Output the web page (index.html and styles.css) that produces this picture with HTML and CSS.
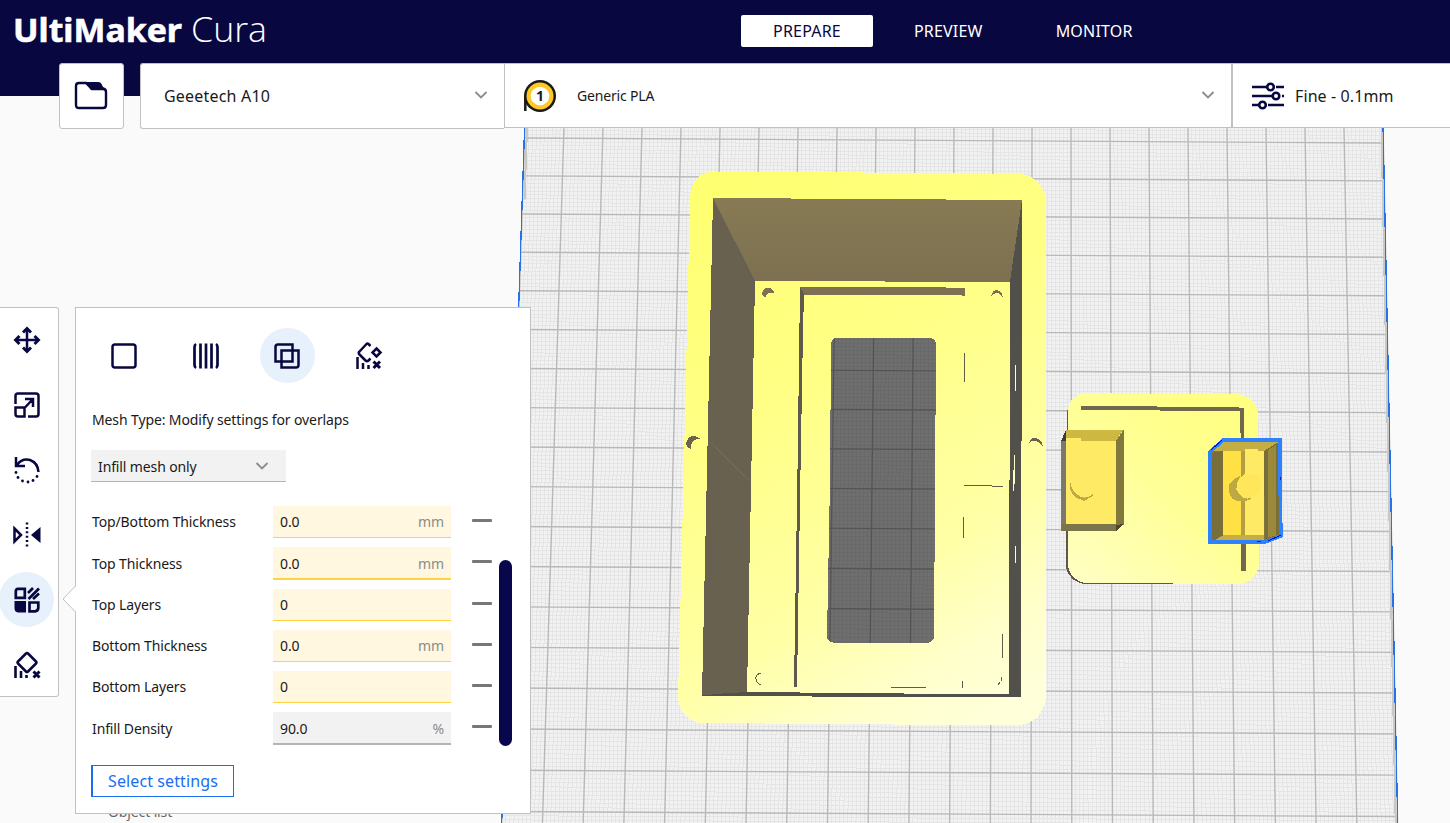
FILE: index.html
```html
<!DOCTYPE html>
<html lang="en">
<head>
<meta charset="utf-8">
<title>UltiMaker Cura</title>
<link rel="stylesheet" href="styles.css">
</head>
<body>
<div class="app">
  <svg class="scene" width="1450" height="823" viewBox="0 0 1450 823">
    <defs>
      <linearGradient id="body" gradientUnits="userSpaceOnUse" x1="740" y1="180" x2="1040" y2="690">
        <stop offset="0" stop-color="#ffff72"/><stop offset=".35" stop-color="#ffff86"/><stop offset=".7" stop-color="#ffffa6"/><stop offset=".88" stop-color="#ffffcc"/><stop offset="1" stop-color="#ffffda"/>
      </linearGradient>
      <linearGradient id="plate" gradientUnits="userSpaceOnUse" x1="1240" y1="400" x2="1080" y2="580">
        <stop offset="0" stop-color="#ffff80"/><stop offset=".5" stop-color="#ffff98"/><stop offset="1" stop-color="#ffffc2"/>
      </linearGradient>
      <linearGradient id="wall" x1="0" y1="0" x2="0" y2="1">
        <stop offset="0" stop-color="#877a54"/><stop offset="1" stop-color="#7c7051"/>
      </linearGradient>
    </defs>
    <path fill="#f2f2f2" d="M525 100L1383 100L1397.5 823L501.5 823Z"/>
    <g id="grid" class="crisp"></g>
    <path class="bed-shade" d="M1381.500 128L1395.700 823M527 128L524.500 200"/>
    <path class="bed-edge" d="M525.5 100L501.7 823M1382.5 100L1397.7 823"/>

    <path fill="url(#body)" fill-rule="evenodd" d="M690 200Q691 174 711 172L810 172L1022 174Q1042 178 1046 199L1046 697Q1043 721 1021 725L893 724.500L699 723Q680 717 678 698L683 500ZM831 343Q832 338 837 337.500L930 338Q935 339 936 343L934 637Q933 642 929 642.500L833 642.500Q828 642 827 637L830 480Z"/>
    <path fill="#000" fill-opacity=".54" d="M831 343Q832 338 837 337.500L930 338Q935 339 936 343L934 637Q933 642 929 642.500L833 642.500Q828 642 827 637L830 480Z"/>
    <path fill="url(#wall)" d="M713 198L1022 200L1011 282L754 281Z"/>
    <path fill="#696150" d="M713 198L755 281L747 693L702 695Z"/>
    <path fill="#52504b" d="M1022 200L1021 697.500L1009 695L1010 281ZM702 695.500L722 693.500L747 692L1009 694.500L1021 697.500L812 696.500Z"/>
    <path class="seam" d="M709 441L751 482"/>
    <path fill="#7d7151" d="M800 287L937 287L965 288.500L965 296L958 295L804 295Z"/>
    <path fill="#605a4d" d="M800 287L804 294L803 330L800.500 470L797 687L794 687L797.500 470Z"/>
    <path fill="#7d7151" d="M762 294Q763 287 769 288Q774 289 774 293Q767 291 765 298ZM991 297Q992 290 997 290Q1002 291 1003 298Q1000 293 997 293Q993 293 991 297Z"/>
    <path fill="#6b6350" d="M686 443Q688 436 694 436Q699 437 700 439Q690 439 691 449Q687 448 686 443ZM1029 443Q1031 437 1036 438Q1042 439 1043 447Q1039 441 1035 441Q1032 440 1029 443Z"/>
    <path class="line" d="M761 673Q755 675 756 679Q757 684 761 685M963.500 517V538M964 485.500H992M992 486.500H1003M964.500 353V382M1002.500 634V658M891 687.500H926M962.500 681V688M1001 677V681M1000 682L998 685"/>
    <path class="gap-line" d="M1014.500 455V484M1013.500 470V491M1015.500 546V563M1015.500 365V391"/>

    <path fill="#5d584b" d="M1067 410L1066 568Q1071 583 1086 584L1240 584.500L1240 575L1080 410Z"/>
    <path fill="url(#plate)" d="M1068 410Q1070 394 1086 393L1111 393L1112 394L1238 394Q1256 397 1258 413L1259 565Q1256 581 1240 584L1173 583.500L1083 582.500Q1069 578 1068 565Z"/>
    <path fill="#6f684e" d="M1081 406V409.500L1160 410.500L1240 411V426L1241 440V570.500H1246L1244 430V408L1233 407Z"/>

    <path fill="#7c786b" d="M1061 441L1066 430V531H1061Z"/>
    <path fill="#3e3c36" d="M1061 441L1066 430V441Z"/>
    <path fill="#ffea65" d="M1066 438H1116V525H1066Z"/>
    <path fill="#cdb941" d="M1066 430H1123L1116 441L1081 440.500V438H1066Z"/>
    <path fill="#82783c" d="M1123.500 430V525H1116V441Z"/>
    <path fill="#7c7549" d="M1061 524H1116V531H1061Z"/>
    <path fill="#4c472b" d="M1116 525L1123.500 524L1116 531Z"/>
    <path fill="#bda944" d="M1070 481Q1071 492 1081 497Q1087 499 1093 494L1093 496L1084 501L1075 497Q1068 489 1070 481Z"/>

    <path fill="#82763c" d="M1210 452L1223 440H1281L1282 535L1265 542H1210Z"/>
    <path fill="#ffe145" d="M1223 451H1245V535H1223Z"/>
    <path fill="#ffea65" d="M1245 450H1264V535H1245Z"/>
    <path fill="#c4ae43" d="M1211 451L1223 441H1280L1265 451H1211ZM1213 541L1224 535H1264V541Z"/>
    <path fill="#ffea65" d="M1245 449H1258V452H1245Z"/>
    <path fill="#786e3a" d="M1211 453L1223 451V535L1212 541ZM1264 451L1280 441V534L1265 540Z"/>
    <path fill="#9c8a3c" d="M1268 450L1276 445V536L1268 537Z"/>
    <path fill="#b39e42" d="M1241 451H1245V535H1241Z"/>
    <path fill="#bda944" d="M1240 476Q1226 482 1229 492Q1232 506 1252 499L1236 490Z"/>
    <path fill="#ffe65a" d="M1245 474Q1232 482 1239 494Q1246 502 1256 496Q1265 487 1257 475Z"/>
    <path class="selection" d="M1210 452L1223 440H1280V480L1281 536L1265 542H1210Z"/>
    <path class="selection-dark" d="M1211 450L1222 440M1280.500 477V480M1268 541L1281 535M1257 541.500H1261"/>
  </svg>

  <header class="header">
    <svg class="logo" width="270" height="56" viewBox="0 0 270 56">
      <text class="logo-bold" x="0" y="42" textLength="169" lengthAdjust="spacingAndGlyphs">UltiMaker</text>
      <text class="logo-light" x="178" y="42" textLength="76" lengthAdjust="spacingAndGlyphs">Cura</text>
    </svg>
    <nav class="tabs"><span class="tab active">PREPARE</span><span class="tab">PREVIEW</span><span class="tab">MONITOR</span></nav>
  </header>

  <div class="toolbar">
    <div class="open-file">
      <svg width="34" height="34" viewBox="0 0 34 34"><path fill="#fff" stroke="#08073f" stroke-width="2.400" d="M5 4H12L18 10H29Q32 10 32 13V26Q32 29 29 29H5Q2 29 2 26V7Q2 4 5 4Z"/><path fill="#08073f" d="M11 3H24Q27 3 28 6L29 8Q33 9 33 14L31 11H17Z"/></svg>
    </div>
    <div class="machine"><span>Geeetech A10</span>
      <svg class="chevron" width="14" height="10" viewBox="0 0 14 10"><path d="M1.500 1L7 6.500L12.500 1"/></svg></div>
    <div class="material">
      <svg width="34" height="34" viewBox="0 0 34 34"><path stroke="#191919" stroke-width="2.500" d="M2.300 17V32"/><circle cx="17" cy="17" r="16" fill="#191919"/><circle cx="17" cy="17" r="13.500" fill="#ffc924"/><circle cx="17" cy="17" r="9.300" fill="#fff"/><text class="spool-number" x="17" y="22" text-anchor="middle">1</text></svg>
      <span class="material-name">Generic PLA</span>
      <svg class="chevron" width="14" height="10" viewBox="0 0 14 10"><path d="M1.500 1L7 6.500L12.500 1"/></svg></div>
    <div class="profile">
      <svg width="34" height="30" viewBox="0 0 34 30"><g fill="none" stroke="#08073f" stroke-width="2.600"><path d="M1 6H16M25 6H33M1 15H21M31 15H33M1 24H8M17 24H33"/><circle cx="19.500" cy="6" r="3.300"/><circle cx="25" cy="15" r="3.300"/><circle cx="11.500" cy="24" r="3.300"/></g></svg>
      <span>Fine - 0.1mm</span></div>
  </div>

  <main class="workspace">
    <aside class="tools">
      <span class="tool"><svg width="28" height="28" viewBox="0 0 28 28" class="ink"><path d="M14 3V25M3 14H25"/><path d="M10 6.500L14 2.500L18 6.500M10 21.500L14 25.500L18 21.500M6.500 10L2.500 14L6.500 18M21.500 10L25.500 14L21.500 18" stroke-width="2.900"/></svg></span>
      <span class="tool"><svg width="28" height="28" viewBox="0 0 28 28" class="ink"><path d="M2.500 13V5Q2.500 2.500 5 2.500H23Q25.500 2.500 25.500 5V23Q25.500 25.500 23 25.500H15M2.500 16.500H11.500V25.500H5Q2.500 25.500 2.500 23ZM11.500 17L20 8M12 8H20V16"/></svg></span>
      <span class="tool"><svg width="28" height="28" viewBox="0 0 28 28" class="ink"><path d="M3 1V10H12M4 9Q9 2 17 4Q25 7 25.500 16"/><g class="solid"><circle cx="3" cy="16.500" r="1.400"/><circle cx="5" cy="21.500" r="1.400"/><circle cx="9.500" cy="25" r="1.400"/><circle cx="15" cy="26" r="1.400"/><circle cx="20" cy="24.500" r="1.400"/><circle cx="24" cy="20.500" r="1.400"/></g></svg></span>
      <span class="tool"><svg width="30" height="28" viewBox="0 0 30 28" class="ink"><path d="M2.500 7.500L9 14L2.500 20.500Z"/><path class="solid" d="M28.500 6V22L19 14Z"/><path stroke-dasharray="2 2.400" d="M15 1.500V27"/></svg></span>
      <span class="tool active"><svg width="28" height="28" viewBox="0 0 28 28" class="ink"><path stroke-width="2.700" d="M5 2.800H11.800V11.800H2.800V5Q3 3 5 2.800ZM16.500 16.500H25.300V22Q25 25 22 25.300H16.500Z"/><path class="solid" d="M1.500 15H13V26.500H5Q1.500 26 1.500 22Z"/><path stroke-width="2.700" d="M15 7L20 2M15.500 13L26 2.500M20 13L26 7.500"/></svg></span>
      <span class="tool"><svg width="28" height="30" viewBox="0 0 28 30" class="ink"><path d="M13 3.500Q14 2.500 15 3.500L23 11.500Q24 12.500 23 13.500L15 21.500Q14 22.500 13 21.500L5 13.500Q4 12.500 5 11.500Z"/><path d="M2.500 16V28M8 21V28M13.500 25V28" stroke-width="2.600"/><path d="M20.500 21.500L26.500 27.500M26.500 21.500L20.500 27.500" stroke-width="3"/></svg></span>
    </aside>

    <section class="panel">
      <svg class="pointer" width="14" height="26" viewBox="0 0 14 26"><path fill="#fff" d="M14 0L1 13L14 26Z"/><path fill="none" stroke="#c0c1c2" d="M13.500 0L1 13L13.500 26"/></svg>
      <div class="mesh-types">
        <span class="mesh-type"><svg width="28" height="28" viewBox="0 0 28 28" class="ink"><rect x="2.500" y="2.500" width="23" height="23" rx="2.500"/></svg></span>
        <span class="mesh-type"><svg width="28" height="28" viewBox="0 0 28 28" class="ink"><path stroke-width="2.700" d="M4 2Q2.500 3 2.500 5V23Q2.500 25 4 26M8.500 1.500V26.500M14 1.500V26.500M19.500 1.500V26.500M24 2Q25.500 3 25.500 5V23Q25.500 25 24 26"/></svg></span>
        <span class="mesh-type active"><svg width="28" height="28" viewBox="0 0 28 28" class="ink"><path d="M5 2.500H19.500V19.500H2.500V5Q2.500 2.500 5 2.500ZM8.500 8.500H25.500V23Q25.500 25.500 23 25.500H8.500Z"/></svg></span>
        <span class="mesh-type"><svg width="28" height="28" viewBox="0 0 28 28" class="ink"><path d="M15.500 4L13.500 2Q12.500 1 11.500 2L4.500 9.500Q3 11 4.500 12.500L10.500 18.500Q12 20 13.500 18.500L15.500 16.500"/><path d="M21.500 6.500L25.500 10.500L21.500 14.500L17.500 10.500Z"/><path d="M2.500 15V27M8 21V27M13.500 23V27" /><path stroke-width="3" d="M18.500 19.500L25 26M25 19.500L18.500 26"/></svg></span>
      </div>
      <div class="mesh-label">Mesh Type: Modify settings for overlaps</div>
      <div class="mesh-select"><span>Infill mesh only</span><svg class="chevron" width="14" height="8" viewBox="0 0 14 8"><path d="M1.500 1L7 6.500L12.500 1"/></svg></div>
      <div class="settings-area">
        <div class="settings">
          <div class="setting"><label>Top/Bottom Thickness</label><div class="field"><span>0.0</span><i>mm</i></div><b class="minus"></b></div>
          <div class="setting lower"><label>Top Thickness</label><div class="field thick"><span>0.0</span><i>mm</i></div><b class="minus"></b></div>
          <div class="setting"><label>Top Layers</label><div class="field"><span>0</span></div><b class="minus"></b></div>
          <div class="setting"><label>Bottom Thickness</label><div class="field"><span>0.0</span><i>mm</i></div><b class="minus"></b></div>
          <div class="setting"><label>Bottom Layers</label><div class="field"><span>0</span></div><b class="minus"></b></div>
          <div class="setting lower"><label>Infill Density</label><div class="field thick plain"><span>90.0</span><i>%</i></div><b class="minus"></b></div>
        </div>
        <div class="scrollbar"></div>
      </div>
      <div class="select-settings">Select settings</div>
    </section>
  </main>
  <footer class="object-list">Object list</footer>
</div>
<script src="grid.js"></script>
</body>
</html>
```
FILE: styles.css
```css
* { box-sizing: border-box; }
body { margin: 0; background: #fafafa; color: #191919; font-family: "Noto Sans", sans-serif; font-size: 14px; }
.app { position: relative; width: 1450px; height: 823px; overflow: hidden; display: flex; flex-direction: column; }

/* Build plate and models, drawn behind the interface */
.scene { position: absolute; left: 0; top: 0; shape-rendering: crispEdges; }
.scene .minor { stroke: #e5e5e5; stroke-width: 1; }
.scene .major { stroke: #b8b8b8; stroke-width: 1.4; shape-rendering: auto; }
.bed-shade { stroke: #c8c8c4; stroke-width: 2; fill: none; }
.bed-edge { stroke: #2672e8; stroke-width: 1.3; fill: none; }
.seam { stroke: #736a53; stroke-width: 1.2; fill: none; }
.line { stroke: #605c4c; fill: none; }
.gap-line { stroke: #ffffc4; fill: none; }
.selection { stroke: #2f82ff; stroke-width: 3.5; fill: none; }
.selection-dark { stroke: #0016d0; fill: none; }

.header { position: relative; flex: none; height: 96px; background: #08073f; display: flex; align-items: flex-start; }
.logo { flex: none; width: 270px; margin: 0 0 0 13px; }
.logo-bold { font: 700 33px "Noto Sans", sans-serif; fill: #fff; stroke: #fff; stroke-width: .6; }
.logo-light { font: 300 34px "Open Sans", sans-serif; fill: #fff; }
.tabs { display: flex; gap: 9px; margin: 15px 0 0 458px; }
.tab { height: 32px; padding: 0 32px; line-height: 32px; font-size: 16px; letter-spacing: .2px; color: #fff; border-radius: 2px; }
.tab.active { background: #fff; color: #08073f; }

.toolbar { position: relative; flex: none; display: flex; height: 65px; margin-top: -33px; padding-left: 59px; font-size: 16px; }
.open-file { display: flex; align-items: center; justify-content: center; width: 65px; height: 66px; margin-right: 16px; padding-right: 1px; background: #fff; border: 1px solid #c0c1c2; border-radius: 3px; }
.machine, .material, .profile { display: flex; align-items: center; height: 65px; background: #fff; border: 1px solid #c0c1c2; border-right: 0; }
.machine { width: 364px; height: 66px; padding: 0 16px 0 23px; justify-content: space-between; border-radius: 3px 0 0 3px; letter-spacing: .2px; }
.material { width: 727px; padding: 0 16px 0 18px; }
.material-name { margin-left: 20px; flex: 1; font-size: 14px; letter-spacing: -.18px; }
.profile { flex: 1; padding-left: 18px; border-left-width: 2px; gap: 10px; letter-spacing: .1px; }
.profile svg { flex: none; }
.chevron { fill: none; stroke: #8c8c8c; stroke-width: 1.8; }
.spool-number { font: 700 14px "Noto Sans", sans-serif; fill: #191919; }

.workspace { position: relative; z-index: 1; flex: none; display: flex; align-items: flex-start; margin-top: 179px; }
.tools { width: 59px; height: 390px; padding: 4px 0 0; background: #fff; border: 1px solid #c0c1c2; border-left: 0; border-radius: 0 3px 3px 0; }
.tool { display: flex; align-items: center; justify-content: center; width: 55px; height: 55px; margin: 0 0 10px -1px; border-radius: 50%; }
.active.tool, .mesh-type.active { background: #e6f1fc; }
.ink { fill: none; stroke: #08073f; stroke-width: 2.5; }
.solid { fill: #08073f; stroke: none; }

.panel { position: relative; width: 456px; height: 507px; margin-left: 16px; padding: 20px 0 0 16px; background: #fff; border: 1px solid #c0c1c2; letter-spacing: -.12px; }
.pointer { position: absolute; left: -14px; top: 278px; }
.mesh-types { display: flex; gap: 27px; height: 55px; margin-left: 5px; }
.mesh-type { display: flex; align-items: center; justify-content: center; width: 54.500px; height: 55px; border-radius: 50%; }
.mesh-label { height: 20px; margin-top: 27px; line-height: 20px; }
.mesh-select { display: flex; align-items: center; justify-content: space-between; width: 195px; height: 32px; margin: 20px 0 0 -1px; padding: 1px 17px 0 7px; background: #f2f2f2; border-bottom: 1px solid #b4b4b4; }
.settings-area { display: flex; height: 240px; margin-top: 24px; }
.settings { width: 407px; }
.setting { display: flex; height: 41.300px; align-items: flex-start; line-height: 32px; }
.setting.lower { line-height: 34px; }
.setting label { width: 181px; }
.field { display: flex; justify-content: space-between; width: 178px; height: 32px; padding: 0 7px; background: #fff7df; border-bottom: 1px solid #ffd23f; }
.field i { font-style: normal; color: #8c8c8c; }
.thick { height: 33px; border-bottom-width: 2px; }
.plain { background: #f2f2f2; border-color: #b4b4b4; }
.minus { width: 20px; height: 3px; margin: 13px 0 0 21px; background: #777; border-radius: 1px; }
.scrollbar { width: 13px; height: 186px; margin-top: 54px; background: #08074b; border-radius: 6.500px; }
.select-settings { width: 143px; height: 32px; margin: 19px 0 0 -1px; line-height: 30px; text-align: center; font-size: 16px; letter-spacing: .1px; color: #196ef0; border: 1px solid #196ef0; border-left-width: 2px; }
.object-list { flex: none; height: 20px; margin: -12px 0 0 108px; line-height: 20px; letter-spacing: -.12px; color: #666; }
```
FILE: grid.js
```js
// Build-plate grid: 22 cells across, each split into ten finer steps.
const grid = document.getElementById("grid");
const NS = "http://www.w3.org/2000/svg";

function line(x1, y1, x2, y2, kind) {
  const el = document.createElementNS(NS, "line");
  el.setAttribute("x1", x1.toFixed(2));
  el.setAttribute("y1", y1.toFixed(2));
  el.setAttribute("x2", x2.toFixed(2));
  el.setAttribute("y2", y2.toFixed(2));
  el.setAttribute("class", kind);
  grid.appendChild(el);
}

const rowY = k => 138 + 37.75 * k + 0.11 * k * k;
const leftAt = y => 525 - (y - 128) * 0.0335;
const rightAt = y => 1383 + (y - 128) * 0.0209;

function draw(major) {
  const kind = major ? "major" : "minor";
  for (let i = 0; i <= 220; i++) {
    if ((i % 10 === 0) !== major) continue;
    const t = i / 220;
    line(leftAt(128) + 858 * t, 128, leftAt(823) + (rightAt(823) - leftAt(823)) * t, 823, kind);
  }
  for (let k = -3; k <= 180; k++) {
    if ((k % 10 === 0) !== major) continue;
    const y = rowY(k / 10);
    line(leftAt(y), y, rightAt(y), y + 5, kind);
  }
}
draw(false);
draw(true);
```
